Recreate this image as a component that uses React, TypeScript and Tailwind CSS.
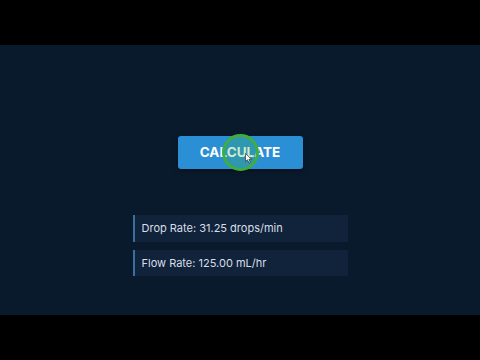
export default function App() {
  return (
    <div className="flex h-[360px] w-[480px] flex-col bg-black font-['Inter',sans-serif]">
      <div className="h-[45px] shrink-0 bg-black" />
      <div className="flex h-[270px] shrink-0 flex-col items-center bg-[#0a1a2d] pt-[91px]">
        <div className="relative">
          <button className="h-[33px] w-[125px] rounded-[3px] bg-[#2a8fd4] text-[13.5px] font-bold text-white shadow-[0_2px_4px_rgba(0,0,0,0.4)]">
            CALCULATE
          </button>
          {/* click indicator */}
          <div className="pointer-events-none absolute left-[44px] top-[-2px] h-[37px] w-[37px] rounded-full border-[3px] border-[#3fae3f] bg-[#3fae3f]/25" />
          <svg
            className="pointer-events-none absolute left-[67px] top-[17px]"
            width="8"
            height="11"
            viewBox="0 0 8 11"
          >
            <path d="M0.5 0.5 L0.5 8.5 L2.5 6.8 L4 10 L5.3 9.4 L3.9 6.3 L6.5 6.3 Z" fill="white" stroke="#1a1a1a" strokeWidth="0.6" />
          </svg>
        </div>

        <div className="mt-[46px] flex w-[215px] flex-col gap-[8px]">
          <div className="flex h-[27px] items-center border-l-2 border-[#3b6f9e] bg-[#10233a] pl-[7px] text-[11px] text-[#d8dee6]">
            Drop Rate: 31.25 drops/min
          </div>
          <div className="flex h-[26px] items-center border-l-2 border-[#3b6f9e] bg-[#10233a] pl-[7px] text-[11px] text-[#d8dee6]">
            Flow Rate: 125.00 mL/hr
          </div>
        </div>
      </div>
      <div className="h-[45px] shrink-0 bg-black" />
    </div>
  );
}
